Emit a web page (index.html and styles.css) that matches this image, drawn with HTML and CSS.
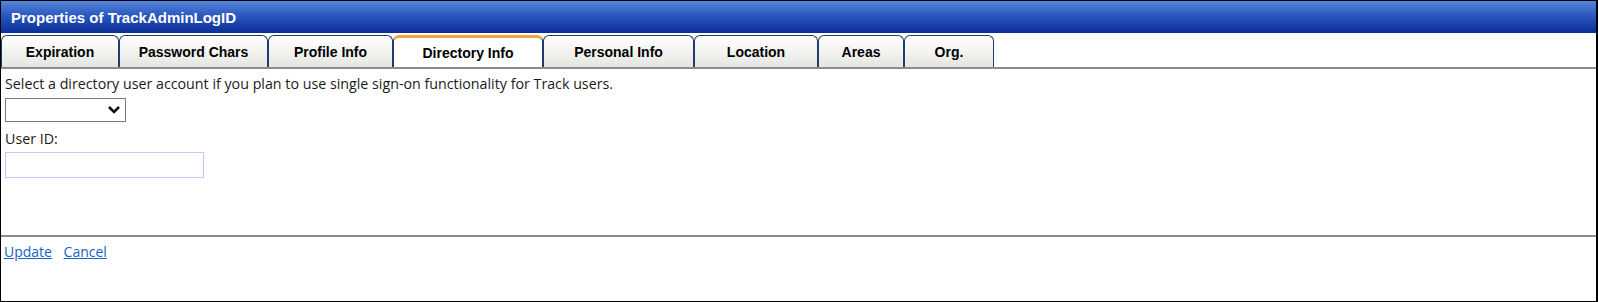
FILE: index.html
```html
<!DOCTYPE html>
<html lang="en">
<head>
    <meta charset="UTF-8">
    <title>Properties of TrackAdminLogID</title>
    <link rel="stylesheet" href="styles.css">
</head>
<body>
    <div class="window">
        <div class="title-bar">Properties of TrackAdminLogID</div>

        <!-- Tab strip -->
        <div class="tabs">
            <a class="tab" href="#">Expiration</a>
            <a class="tab" href="#">Password Chars</a>
            <a class="tab" href="#">Profile Info</a>
            <a class="tab active" href="#">Directory Info</a>
            <a class="tab" href="#">Personal Info</a>
            <a class="tab" href="#">Location</a>
            <a class="tab" href="#">Areas</a>
            <a class="tab" href="#">Org.</a>
        </div>

        <div class="tab-body">
            <p class="hint">Select a directory user account if you plan to use single sign-on functionality for Track users.</p>
            <div class="select-box">
                <svg width="14" height="10" viewBox="0 0 14 10">
                    <path d="M2 2 L7 7 L12 2" fill="none" stroke="#111" stroke-width="2.6"/>
                </svg>
            </div>
            <label class="field-label">User ID:</label>
            <input class="text-input" type="text">
        </div>

        <div class="actions">
            <a href="#">Update</a>
            <a href="#">Cancel</a>
        </div>
    </div>
</body>
</html>
```

FILE: styles.css
```css
/* Global Styles */
body {
    margin: 0;
    padding: 0;
    background-color: #fff;
    font-family: "Liberation Sans", Arial, sans-serif;
}

.window {
    box-sizing: border-box;
    width: 1598px;
    height: 302px;
    border: 1px solid #000;
    border-right-width: 2px;
    display: flex;
    flex-direction: column;
}

/* Title bar */
.title-bar {
    height: 32px;
    line-height: 34px;
    padding-left: 10px;
    color: #fff;
    font-weight: bold;
    font-size: 15px;
    background: linear-gradient(to bottom, #5686da 0%, #2b58bf 45%, #0a2e95 100%);
}

/* Tabs */
.tabs {
    display: flex;
    margin-top: 2px;
    height: 32px;
    border-bottom: 2px solid #8c8c8c;
}

.tab {
    box-sizing: border-box;
    height: 32px;
    line-height: 32px;
    text-align: center;
    color: #000;
    font-weight: bold;
    font-size: 14px;
    text-decoration: none;
    border: 1px solid #1e3c6c;
    border-bottom: none;
    border-radius: 6px 6px 0 0;
    background: linear-gradient(to bottom, #ffffff 0%, #f3f3f1 50%, #e4e4e0 100%);
}

.tab:nth-child(1) { width: 118px; }
.tab:nth-child(2) { width: 149px; }
.tab:nth-child(3) { width: 125px; }
.tab:nth-child(4) { width: 150px; }
.tab:nth-child(5) { width: 151px; }
.tab:nth-child(6) { width: 124px; }
.tab:nth-child(7) { width: 86px; }
.tab:nth-child(8) { width: 90px; }

.tab.active {
    background: #fff;
    border-top: 3px solid #f3a53a;
    line-height: 30px;
}

/* Tab content */
.tab-body {
    height: 161px;
    padding: 5px 4px 0;
    border-bottom: 2px solid #8c8c8c;
    font-family: "Open Sans", sans-serif;
    font-size: 14.25px;
    color: #1a1a1a;
}

.hint {
    margin: 0 0 5px;
    line-height: 19px;
}

.select-box {
    box-sizing: border-box;
    width: 121px;
    height: 24px;
    border: 1px solid #7a7a7a;
    display: flex;
    align-items: center;
    justify-content: flex-end;
    padding-right: 4px;
}

.field-label {
    display: block;
    margin: 7px 0 4px;
    line-height: 19px;
}

.text-input {
    display: block;
    box-sizing: border-box;
    width: 199px;
    height: 26px;
    margin: 0;
    border: 1px solid #b9cff2;
}

/* Footer links */
.actions {
    padding: 5px 3px;
    font-family: "Open Sans", sans-serif;
    font-size: 14px;
}

.actions a {
    color: #1764c4;
    margin-right: 8px;
}
```
